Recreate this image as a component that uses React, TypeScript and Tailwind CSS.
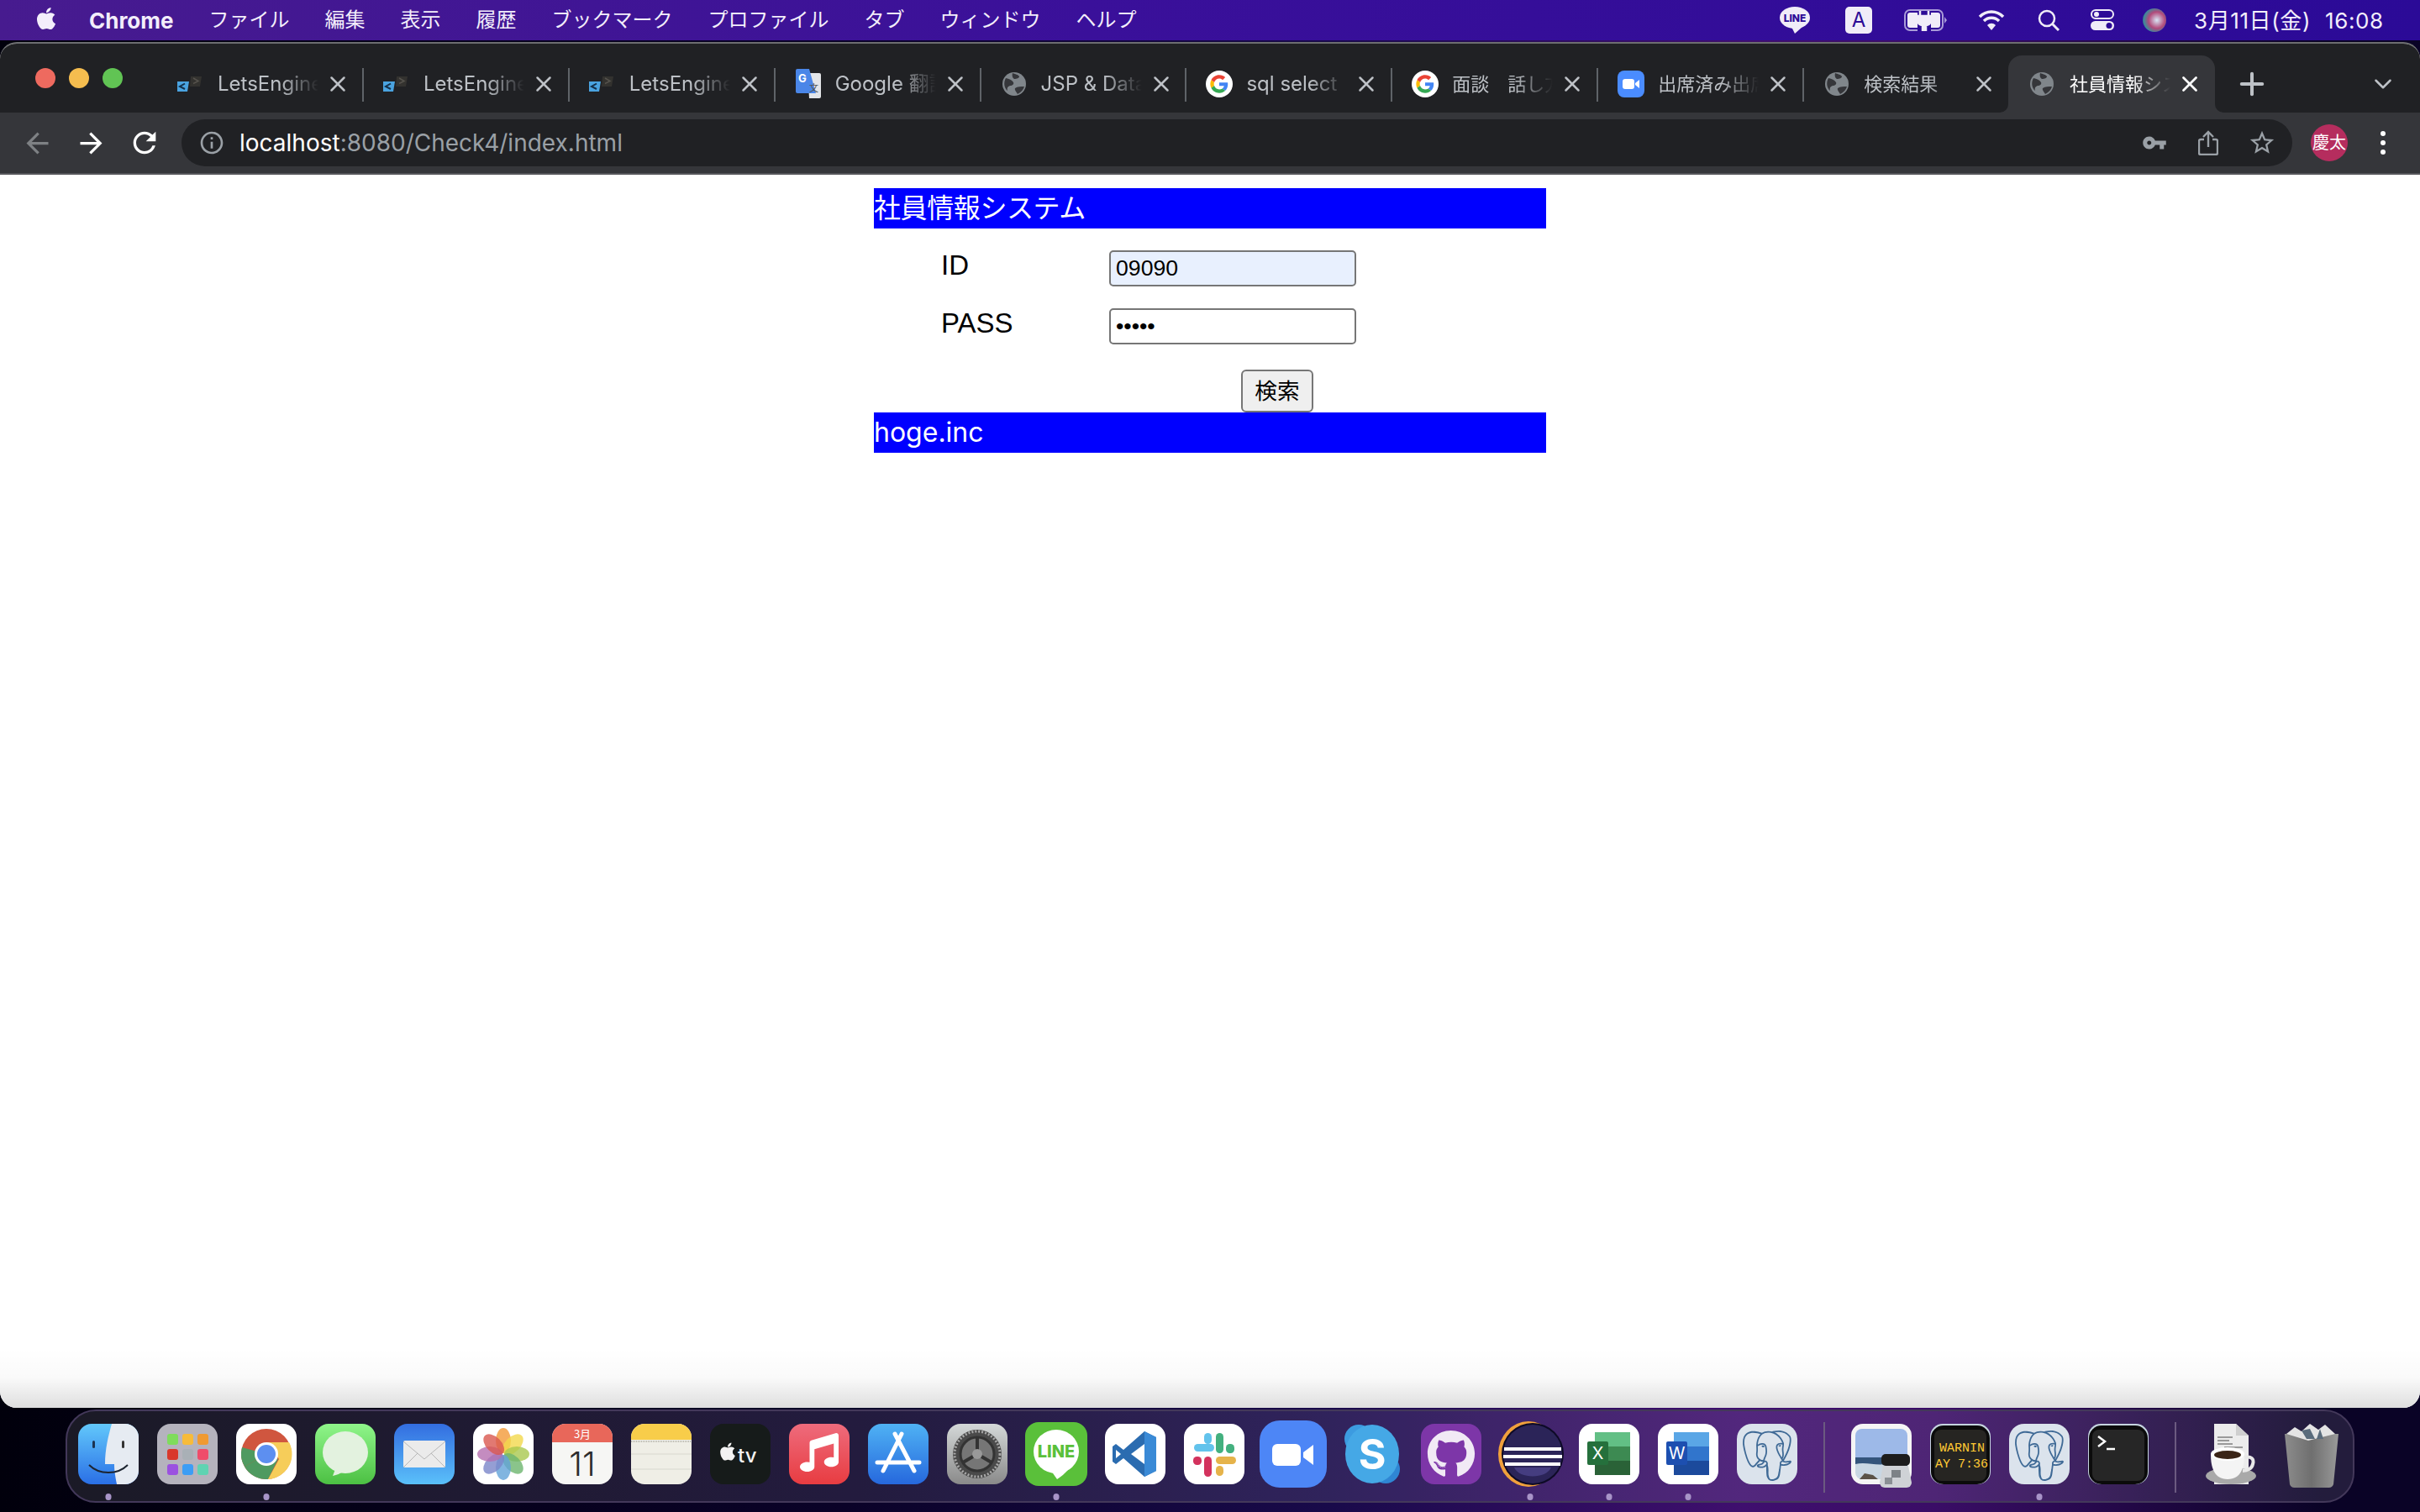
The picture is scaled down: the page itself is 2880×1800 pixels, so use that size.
import type { ReactNode } from "react";
import { ChevronDown, Plus, X } from "lucide-react";
import { FaApple, FaGithub, FaMusic } from "react-icons/fa";
import { SiPostgresql } from "react-icons/si";

const menus = ["ファイル", "編集", "表示", "履歴", "ブックマーク", "プロファイル", "タブ", "ウィンドウ", "ヘルプ"];

const GlobeIcon = () => (
	<svg width="32" height="32" viewBox="0 0 32 32">
		<circle cx="16" cy="16" r="14" fill="#80868b" />
		<path d="M6 9c4 1 7 2 9 5 1 2-1 4-4 4-3 1-4 3-3 6-4-3-5-10-2-15z" fill="#35363a" />
		<path d="M17 21c3-2 7-2 11-2-1 4-4 7-8 9-1-2-4-5-3-7zM14 3c3 1 7 2 8 4 0 2-3 3-6 3-2-1-3-4-2-7z" fill="#35363a" />
	</svg>
);

const LetsIcon = () => (
	<svg width="32" height="32" viewBox="0 0 32 32">
		<path d="M16 7h13l-2 12H15z" fill="#33322f" />
		<path d="M19 9l6 3.5-6 3" fill="none" stroke="#55524c" strokeWidth="1.5" />
		<path d="M0 13h14l-2 12H0z" fill="#4aa3e0" />
		<path d="M9 15.5l-6 3.5 6 3" fill="none" stroke="#14304a" strokeWidth="2" />
	</svg>
);

const TranslateIcon = () => (
	<svg width="32" height="38" viewBox="0 0 32 38">
		<path d="M15 6h14a2 2 0 0 1 2 2v26a2 2 0 0 1-2 2H17z" fill="#e3e5e8" />
		<path d="M3 1h14l8 29H3a2 2 0 0 1-2-2V3a2 2 0 0 1 2-2z" fill="#4a86e8" />
		<text x="4" y="17" fontSize="13" fontWeight="700" fill="#fff" fontFamily="Inter">G</text>
		<text x="17" y="28" fontSize="11" fill="#555" fontFamily="Noto Sans CJK JP">文</text>
	</svg>
);

const GoogleIcon = () => (
	<svg width="32" height="32" viewBox="0 0 48 48">
		<circle cx="24" cy="24" r="24" fill="#fff" />
		<g transform="translate(8 8) scale(0.667)">
			<path fill="#EA4335" d="M24 9.5c3.5 0 6.7 1.2 9.2 3.6l6.9-6.9C35.9 2.4 30.5 0 24 0 14.6 0 6.5 5.4 2.6 13.2l8 6.2C12.5 13.7 17.8 9.5 24 9.5z" />
			<path fill="#4285F4" d="M47 24.5c0-1.6-.1-3.1-.4-4.5H24v9h12.9c-.6 3-2.2 5.5-4.7 7.2l7.7 6c4.5-4.2 7.1-10.3 7.1-17.7z" />
			<path fill="#FBBC05" d="M10.5 28.6c-.5-1.4-.8-3-.8-4.6s.3-3.2.8-4.6l-8-6.2C.9 16.5 0 20.1 0 24s.9 7.5 2.6 10.8l7.9-6.2z" />
			<path fill="#34A853" d="M24 48c6.5 0 11.9-2.1 15.9-5.8l-7.7-6c-2.2 1.4-4.9 2.3-8.2 2.3-6.2 0-11.5-4.2-13.4-9.9l-8 6.2C6.5 42.6 14.6 48 24 48z" />
		</g>
	</svg>
);

const ZoomFavicon = () => (
	<svg width="32" height="32" viewBox="0 0 32 32">
		<rect width="32" height="32" rx="8" fill="#4a8cff" />
		<rect x="6" y="10" width="14" height="12" rx="3" fill="#fff" />
		<path d="M21 15l5-4v10l-5-4z" fill="#fff" />
	</svg>
);

const tabs: { title: string; icon: ReactNode; cjk?: boolean }[] = [
	{ title: "LetsEngine", icon: <LetsIcon /> },
	{ title: "LetsEngine", icon: <LetsIcon /> },
	{ title: "LetsEngine", icon: <LetsIcon /> },
	{ title: "Google 翻訳", icon: <TranslateIcon /> },
	{ title: "JSP & Data", icon: <GlobeIcon /> },
	{ title: "sql select", icon: <GoogleIcon /> },
	{ title: "面談　話し方", icon: <GoogleIcon />, cjk: true },
	{ title: "出席済み出席", icon: <ZoomFavicon />, cjk: true },
	{ title: "検索結果", icon: <GlobeIcon />, cjk: true },
];

const Tile = ({ children }: { children: ReactNode }) => (
	<svg width="72" height="72" viewBox="0 0 72 72" className="overflow-visible">
		{children}
	</svg>
);

const Finder = () => (
	<Tile>
		<defs>
			<linearGradient id="fa" x1="0" y1="0" x2="0" y2="1">
				<stop offset="0" stopColor="#62c8fb" />
				<stop offset="1" stopColor="#2a6fe6" />
			</linearGradient>
		</defs>
		<rect width="72" height="72" rx="16" fill="url(#fa)" />
		<path d="M40 0h16a16 16 0 0 1 16 16v40a16 16 0 0 1-16 16H46c-2-10-3-16-3-24H32c0-18 4-34 8-48z" fill="#e6ebf2" />
		<rect x="17" y="20" width="3" height="9" rx="1.5" fill="#1c3350" />
		<rect x="52" y="20" width="3" height="9" rx="1.5" fill="#333" />
		<path d="M13 49c12 12 34 12 46 0" fill="none" stroke="#1c2430" strokeWidth="2" />
	</Tile>
);

const launchColors = ["#7fdc5c", "#f7bb3a", "#f09a32", "#d9382c", "#a9b0b6", "#ef4c6a", "#9b51e0", "#3d9df5", "#5fd3b2"];

const Launchpad = () => (
	<Tile>
		<rect width="72" height="72" rx="16" fill="#b5b3bd" />
		{launchColors.map((color, index) => (
			<rect key={index.toString()} x={12 + (index % 3) * 18} y={12 + Math.floor(index / 3) * 18} width="13" height="13" rx="3" fill={color} />
		))}
	</Tile>
);

const Chrome = () => (
	<Tile>
		<rect width="72" height="72" rx="16" fill="#fff" />
		<circle cx="36" cy="36" r="30" fill="#d0563f" />
		<path d="M36 36L10 51a30 30 0 0 1-3-23z" fill="#4f9a60" />
		<path d="M10 51a30 30 0 0 0 28 15l12-24-14-6z" fill="#4f9a60" />
		<path d="M36 22h27a30 30 0 0 1-25 44l13-24z" fill="#f6cd5a" />
		<circle cx="36" cy="36" r="14" fill="#fff" />
		<circle cx="36" cy="36" r="11" fill="#5d8ff0" />
	</Tile>
);

const Messages = () => (
	<Tile>
		<defs>
			<linearGradient id="ms" x1="0" y1="0" x2="0" y2="1">
				<stop offset="0" stopColor="#8ff58a" />
				<stop offset="1" stopColor="#4cc043" />
			</linearGradient>
		</defs>
		<rect width="72" height="72" rx="16" fill="url(#ms)" />
		<ellipse cx="36" cy="34" rx="27" ry="25" fill="#e3f2df" />
		<path d="M24 54l-3 8c5-1 9-3 12-5z" fill="#e3f2df" />
	</Tile>
);

const Mail = () => (
	<Tile>
		<defs>
			<linearGradient id="ml" x1="0" y1="0" x2="0" y2="1">
				<stop offset="0" stopColor="#336de0" />
				<stop offset="1" stopColor="#5ac0fa" />
			</linearGradient>
		</defs>
		<rect width="72" height="72" rx="16" fill="url(#ml)" />
		<rect x="11" y="20" width="50" height="32" rx="2" fill="#ebebeb" />
		<path d="M11 21l25 21 25-21M11 52l17-17M61 52L44 35" fill="none" stroke="#b7b7b7" strokeWidth="1" />
	</Tile>
);

const petalColors = ["#f29a38", "#f3d84c", "#a9c84f", "#6db56e", "#62a3d8", "#7a86c9", "#b56fb0", "#d9584f"];

const Photos = () => (
	<Tile>
		<rect width="72" height="72" rx="16" fill="#fff" />
		{petalColors.map((color, index) => (
			<ellipse key={index.toString()} cx="36" cy="20" rx="9" ry="15" fill={color} opacity="0.8" transform={`rotate(${index * 45} 36 36)`} />
		))}
	</Tile>
);

const CalendarTile = () => (
	<Tile>
		<rect width="72" height="72" rx="16" fill="#f6f6f4" />
		<path d="M0 22V16A16 16 0 0 1 16 0h40a16 16 0 0 1 16 16v6z" fill="#e8675a" />
		<text x="36" y="17" textAnchor="middle" fontSize="13" fill="#fff" fontFamily="Noto Sans CJK JP">3月</text>
		<text x="36" y="62" textAnchor="middle" fontSize="40" fill="#2d2d2d" fontFamily="Inter" fontWeight="300">11</text>
	</Tile>
);

const Notes = () => (
	<Tile>
		<rect width="72" height="72" rx="16" fill="#efeee6" />
		<path d="M0 19V16A16 16 0 0 1 16 0h40a16 16 0 0 1 16 16v3z" fill="#f8cd4a" />
		<path d="M0 21h72" stroke="#b9b8ae" strokeWidth="2" strokeDasharray="1 1" />
		<path d="M0 36h72M0 54h72" stroke="#d8d7ce" strokeWidth="1" />
	</Tile>
);

const AppleTv = () => (
	<Tile>
		<rect width="72" height="72" rx="16" fill="#161b1a" />
		<FaApple x="9" y="21" size="24" color="#f2f2f2" />
		<text x="33" y="46" fontSize="24" fontWeight="500" fill="#f2f2f2" fontFamily="Inter">tv</text>
	</Tile>
);

const Music = () => (
	<Tile>
		<defs>
			<linearGradient id="mu" x1="0" y1="0" x2="0" y2="1">
				<stop offset="0" stopColor="#ee6b7c" />
				<stop offset="1" stopColor="#e83c41" />
			</linearGradient>
		</defs>
		<rect width="72" height="72" rx="16" fill="url(#mu)" />
		<FaMusic x="13" y="11" size="46" color="#fff" />
	</Tile>
);

const AppStore = () => (
	<Tile>
		<defs>
			<linearGradient id="as" x1="0" y1="0" x2="0" y2="1">
				<stop offset="0" stopColor="#4fb2f4" />
				<stop offset="1" stopColor="#2668dd" />
			</linearGradient>
		</defs>
		<rect width="72" height="72" rx="16" fill="url(#as)" />
		<path d="M40 12L18 56M32 12l23 44M11 46h50" stroke="#fff" strokeWidth="5" strokeLinecap="round" fill="none" />
	</Tile>
);

const SystemPrefs = () => (
	<Tile>
		<defs>
			<linearGradient id="sp" x1="0" y1="0" x2="0" y2="1">
				<stop offset="0" stopColor="#d4d8d8" />
				<stop offset="1" stopColor="#8a8a8a" />
			</linearGradient>
		</defs>
		<rect width="72" height="72" rx="16" fill="url(#sp)" />
		<circle cx="36" cy="36" r="29" fill="#4a4a4a" />
		<circle cx="36" cy="36" r="27" fill="none" stroke="#a8a8a8" strokeWidth="3" strokeDasharray="2 2" />
		<circle cx="36" cy="36" r="20" fill="#767676" stroke="#333" strokeWidth="3" />
		<path d="M36 36V16M36 36L19 46M36 36l17 10" stroke="#333" strokeWidth="4" />
		<circle cx="36" cy="36" r="6" fill="#999" />
	</Tile>
);

const LineTile = () => (
	<Tile>
		<rect x="-1" y="-2" width="74" height="76" rx="16" fill="#5ac03a" />
		<ellipse cx="36" cy="33" rx="27" ry="26" fill="#fff" />
		<path d="M30 56l7 10c5-3 9-7 13-11z" fill="#fff" />
		<text x="36" y="40" textAnchor="middle" fontSize="20" fontWeight="800" fill="#5ac03a" fontFamily="Inter">LINE</text>
	</Tile>
);

const VsCode = () => (
	<Tile>
		<rect width="72" height="72" rx="16" fill="#fff" />
		<path d="M47 9L61 16V56L47 63L22 41L13 48L9 45V27L13 24L22 31Z" fill="#2b6cb0" />
		<path d="M47 9L61 16V56L47 63Z" fill="#3a8ad6" />
		<path d="M47 24L31 36L47 48Z" fill="#fff" />
		<path d="M13 31L19 36L13 41Z" fill="#fff" />
	</Tile>
);

const Slack = () => (
	<Tile>
		<rect width="72" height="72" rx="16" fill="#fff" />
		<rect x="12" y="24" width="24" height="9" rx="4.5" fill="#62c3ec" />
		<rect x="24" y="11" width="9" height="13" rx="4.5" fill="#62c3ec" />
		<rect x="38" y="11" width="9" height="24" rx="4.5" fill="#43b07f" />
		<rect x="50" y="24" width="10" height="11" rx="4.5" fill="#43b07f" />
		<rect x="38" y="39" width="24" height="9" rx="4.5" fill="#e6b34a" />
		<rect x="38" y="50" width="9" height="12" rx="4.5" fill="#e6b34a" />
		<rect x="24" y="39" width="9" height="24" rx="4.5" fill="#d3325d" />
		<rect x="11" y="39" width="10" height="10" rx="4.5" fill="#d3325d" />
	</Tile>
);

const ZoomTile = () => (
	<Tile>
		<rect x="-4" y="-4" width="80" height="80" rx="24" fill="#4d86f6" />
		<rect x="11" y="24" width="34" height="26" rx="6" fill="#fff" />
		<path d="M48 34l12-9v24l-12-9z" fill="#fff" />
	</Tile>
);

const Skype = () => (
	<Tile>
		<circle cx="20" cy="18" r="17" fill="#3c9be0" />
		<circle cx="52" cy="54" r="17" fill="#2f86d4" />
		<ellipse cx="36" cy="36" rx="32" ry="35" fill="#45a8e6" />
		<text x="36" y="54" textAnchor="middle" fontSize="50" fontWeight="700" fill="#fff" fontFamily="Inter">S</text>
	</Tile>
);

const Github = () => (
	<Tile>
		<rect width="72" height="72" rx="16" fill="#7d36a8" />
		<FaGithub x="7" y="7" size="58" color="#f1e9f5" />
	</Tile>
);

const Eclipse = () => (
	<Tile>
		<ellipse cx="36" cy="36" rx="36" ry="39" fill="#f0a03c" transform="translate(-2 0)" />
		<circle cx="39" cy="36" r="37" fill="#0d0a26" />
		<circle cx="39" cy="36" r="35" fill="#2b2458" />
		<path d="M5 28h68v4H5zM4 37h70v4H4zM6 46h66v4H6z" fill="#fff" />
		<path d="M17 52c6 14 38 14 44 0z" fill="#453d80" />
	</Tile>
);

const OfficeTile = ({ letter, dark, mid, light, badge }: { letter: string; dark: string; mid: string; light: string; badge: string }) => (
	<Tile>
		<rect width="72" height="72" rx="16" fill="#fff" />
		<rect x="19" y="10" width="42" height="17" fill={light} />
		<rect x="19" y="27" width="42" height="17" fill={mid} />
		<rect x="19" y="44" width="42" height="17" fill={dark} />
		<rect x="10" y="21" width="25" height="28" rx="2" fill={badge} />
		<text x="22.5" y="42" textAnchor="middle" fontSize="20" fill="#fff" fontFamily="Inter">{letter}</text>
	</Tile>
);

const Postgres = () => (
	<Tile>
		<rect width="72" height="72" rx="18" fill="#dbe3ec" />
		<SiPostgresql x="6" y="8" size="60" color="#3f6a96" />
	</Tile>
);

const Preview = () => (
	<Tile>
		<rect width="72" height="72" rx="14" fill="#f5f5f5" />
		<path d="M5 14a8 8 0 0 1 8-8h46a8 8 0 0 1 8 8v28H5z" fill="#9db9e8" />
		<path d="M5 40h62v14H5z" fill="#34557c" />
		<path d="M5 48c12-3 24 2 36 0v18H13a8 8 0 0 1-8-8z" fill="#c9d7e3" />
		<path d="M10 66l6-7 10 2 6 5z" fill="#5b5348" />
		<rect x="36" y="36" width="34" height="14" rx="5" fill="#1d1d1d" />
		<path d="M38 50h30l4 20a6 6 0 0 1-6 6H40a6 6 0 0 1-6-6z" fill="#cfd2d6" />
		<rect x="48" y="55" width="11" height="9" fill="#7d8287" />
		<rect x="40" y="64" width="9" height="8" fill="#8b9095" />
	</Tile>
);

const ConsoleTile = () => (
	<Tile>
		<rect width="72" height="72" rx="15" fill="#c5d4df" />
		<rect x="1" y="2" width="70" height="70" rx="15" fill="#0b0b0b" />
		<rect x="5" y="7" width="62" height="61" rx="8" fill="#262522" />
		<text x="11" y="33" fontSize="15" fill="#ffc933" fontFamily="Liberation Mono">WARNIN</text>
		<text x="6" y="52" fontSize="15" fill="#ffc933" fontFamily="Liberation Mono">AY 7:36</text>
	</Tile>
);

const TerminalTile = () => (
	<Tile>
		<rect width="72" height="72" rx="15" fill="#c5d4df" />
		<rect x="1" y="2" width="70" height="70" rx="15" fill="#0b0b0b" />
		<rect x="5" y="7" width="62" height="61" rx="8" fill="#262626" />
		<path d="M12 15l8 6-8 6M22 30h10" fill="none" stroke="#fff" strokeWidth="2.5" />
	</Tile>
);

const CoffeeDoc = () => (
	<Tile>
		<path d="M14 0h26l15 14v58H14z" fill="#ececec" />
		<path d="M40 0v14h15z" fill="#cfcfcf" />
		<path d="M18 16h18M18 20h14M18 24h18M26 28h22" stroke="#9a9a9a" strokeWidth="2" />
		<ellipse cx="34" cy="62" rx="30" ry="10" fill="#a9a9a9" />
		<path d="M10 36h40c0 16-4 30-20 30S10 52 10 36z" fill="#f4f4f4" />
		<ellipse cx="30" cy="36" rx="20" ry="8" fill="#fff" />
		<ellipse cx="30" cy="37" rx="16" ry="5" fill="#3b2517" />
		<path d="M50 40c8-2 12 2 10 8-1 5-6 8-12 8" fill="none" stroke="#e8e8e8" strokeWidth="4" />
	</Tile>
);

const Trash = () => (
	<Tile>
		<defs>
			<linearGradient id="tr" x1="0" y1="0" x2="1" y2="0">
				<stop offset="0" stopColor="#8c8c8c" />
				<stop offset="0.5" stopColor="#6f6f6f" />
				<stop offset="1" stopColor="#9a9a9a" />
			</linearGradient>
		</defs>
		<path d="M4 12h64l-6 60a6 6 0 0 1-6 4H16a6 6 0 0 1-6-4z" fill="url(#tr)" />
		<path d="M6 12l10-8 8 5 10-9 10 7 8-6 12 11-32 8z" fill="#e4e4e4" />
		<path d="M24 8l6 10h10l-6-12zM46 6l-4 12h8z" fill="#5a6c7c" />
	</Tile>
);

const dockLeft: { icon: ReactNode; running?: boolean }[] = [
	{ icon: <Finder />, running: true },
	{ icon: <Launchpad /> },
	{ icon: <Chrome />, running: true },
	{ icon: <Messages /> },
	{ icon: <Mail /> },
	{ icon: <Photos /> },
	{ icon: <CalendarTile /> },
	{ icon: <Notes /> },
	{ icon: <AppleTv /> },
	{ icon: <Music /> },
	{ icon: <AppStore /> },
	{ icon: <SystemPrefs /> },
	{ icon: <LineTile />, running: true },
	{ icon: <VsCode /> },
	{ icon: <Slack /> },
	{ icon: <ZoomTile /> },
	{ icon: <Skype /> },
	{ icon: <Github /> },
	{ icon: <Eclipse />, running: true },
	{ icon: <OfficeTile letter="X" dark="#2a6237" mid="#3d8a52" light="#62bf85" badge="#25703c" />, running: true },
	{ icon: <OfficeTile letter="W" dark="#1c4a9c" mid="#3175cc" light="#5aa6e6" badge="#1d4fb0" />, running: true },
	{ icon: <Postgres /> },
];

const dockRecent: { icon: ReactNode; running?: boolean }[] = [
	{ icon: <Preview /> },
	{ icon: <ConsoleTile /> },
	{ icon: <Postgres />, running: true },
	{ icon: <TerminalTile /> },
];

const DockItem = ({ icon, running }: { icon: ReactNode; running?: boolean }) => (
	<div className="relative h-[72px] w-[72px] shrink-0">
		{icon}
		{running && <span className="absolute left-1/2 top-[83px] h-2 w-[7px] -translate-x-1/2 rounded-full bg-[#a894c8]" />}
	</div>
);

const DockDivider = () => <div className="mx-[9px] mt-[-2px] h-[84px] w-0.5 shrink-0 bg-[#6b5a80]" />;

const Field = ({ label, type, value, filled }: { label: string; type: string; value: string; filled?: boolean }) => (
	<div className="grid grid-cols-[280px_294px] items-start">
		<label className="pl-20 font-['Liberation_Sans',sans-serif] text-[33px] leading-[36px] text-black">{label}</label>
		<input
			readOnly
			type={type}
			value={value}
			className={`h-[43px] w-[294px] rounded-[5px] border-2 border-[#767676] px-1.5 font-['Liberation_Sans',sans-serif] text-[26.67px] text-black outline-none ${filled ? "bg-[#e8f0fe]" : "bg-white"}`}
		/>
	</div>
);

const App = () => {
	return (
		<div className="flex h-[1800px] w-[2880px] flex-col overflow-hidden bg-[linear-gradient(90deg,#01000c_0%,#0a0228_35%,#190a4a_55%,#3f0f6e_72%,#3a0d66_80%,#0a0326_96%)] font-['Inter','Noto_Sans_CJK_JP',sans-serif]">
			{/* menu bar */}
			<div className="flex h-12 shrink-0 items-center bg-[linear-gradient(90deg,#471b8f,#3a109a_45%,#2b0a97)] pl-10 pr-[37px] text-[24px] text-[#f3eefb]">
				<FaApple size={30} className="mb-1" />
				<span className="ml-[36px] mr-[42px] text-[26px] font-bold">Chrome</span>
				<div className="flex gap-[42px]">
					{menus.map((menu) => (
						<span key={menu}>{menu}</span>
					))}
				</div>
				<div className="ml-auto flex items-center">
					<svg width="36" height="34" viewBox="0 0 36 34">
						<ellipse cx="18" cy="14" rx="18" ry="13" fill="#f0ecf8" />
						<path d="M14 25l4 8 9-8z" fill="#f0ecf8" />
						<text x="18" y="19" textAnchor="middle" fontSize="12" fontWeight="800" fill="#2c0a96" fontFamily="Inter">LINE</text>
					</svg>
					<div className="ml-[42px] flex h-8 w-8 items-center justify-center rounded-[5px] bg-[#f0ecf8] text-[24px] text-[#2c0a96]">A</div>
					<svg className="ml-[38px]" width="52" height="26" viewBox="0 0 52 26">
						<rect x="1" y="1" width="45" height="24" rx="6" fill="none" stroke="#a99bd8" strokeWidth="2" />
						<rect x="4" y="4" width="39" height="18" rx="3" fill="#f0ecf8" />
						<path d="M48 9l3 4-3 4z" fill="#a99bd8" />
						<path d="M16 2h16v24H16z" fill="#2c0a96" />
						<path d="M19 2v7M29 2v7M16 8h16v5c0 4-3 6-6 6v7h-4v-7c-3 0-6-2-6-6z" stroke="#f0ecf8" strokeWidth="2.5" fill="#f0ecf8" />
					</svg>
					<svg className="ml-[36px]" width="32" height="26" viewBox="0 0 32 26">
						<path d="M2 9c8-8 20-8 28 0M7 14c5-5 13-5 18 0" fill="none" stroke="#f0ecf8" strokeWidth="3.5" />
						<path d="M11 19c3-3 7-3 10 0l-5 6z" fill="#f0ecf8" />
					</svg>
					<svg className="ml-[39px]" width="26" height="26" viewBox="0 0 26 26">
						<circle cx="11" cy="11" r="9" fill="none" stroke="#f0ecf8" strokeWidth="2.5" />
						<path d="M17 17l8 8" stroke="#f0ecf8" strokeWidth="3" />
					</svg>
					<svg className="ml-[37px]" width="28" height="26" viewBox="0 0 28 26">
						<rect x="1" y="1" width="26" height="10" rx="5" fill="none" stroke="#f0ecf8" strokeWidth="2" />
						<circle cx="7" cy="6" r="3" fill="#f0ecf8" />
						<rect y="14" width="28" height="11" rx="5.5" fill="#f0ecf8" />
						<circle cx="22" cy="19.5" r="3.5" fill="#2c0a96" />
					</svg>
					<div className="ml-[34px] h-7 w-7 rounded-full bg-[radial-gradient(circle_at_60%_50%,#d8e6f5,#b14a7a_45%,#3e8a9c_70%,#27255e)]" />
					<span className="ml-[33px] w-[232px] whitespace-nowrap text-[26px] tracking-[0.6px]">
						3月11日(金)<span className="ml-[17px]">16:08</span>
					</span>
				</div>
			</div>

			{/* browser window */}
			<div className="mt-0.5 flex h-[1626px] shrink-0 flex-col overflow-hidden rounded-[20px] border-t-2 border-[#6d6e70] bg-white">
				<div className="flex h-[82px] shrink-0 items-start bg-[#202124] pt-3.5">
					<div className="flex h-[68px] w-[188px] shrink-0 items-start gap-4 pl-[42px] pt-[15px]">
						<span className="h-6 w-6 rounded-full bg-[#ee6a5f]" />
						<span className="h-6 w-6 rounded-full bg-[#f5bd4f]" />
						<span className="h-6 w-6 rounded-full bg-[#61c454]" />
					</div>
					{tabs.map((tab, index) => (
						<div key={index.toString()} className="relative flex h-[68px] w-[244.9px] shrink-0 items-center pl-[23px]">
							<span className="flex w-8 shrink-0 items-center justify-center">{tab.icon}</span>
							<span className={`ml-4 mr-1.5 w-[120px] overflow-hidden whitespace-nowrap text-[#bdc1c6] [mask-image:linear-gradient(to_right,black_62%,transparent)] ${tab.cjk ? "text-[22px]" : "text-[24px]"}`}>
								{tab.title}
							</span>
							<X size={30} strokeWidth={2} className="ml-0.5 shrink-0 text-[#bdc1c6]" />
							{index !== 8 && <span className="absolute right-0 top-[15px] h-10 w-0.5 bg-[#5f6368]" />}
						</div>
					))}
					<div className="relative -ml-0.5 flex h-[68px] w-[246px] shrink-0 items-center rounded-t-[16px] bg-[#35363a] pl-[24px]">
						<span className="absolute -left-2.5 bottom-0 h-2.5 w-2.5 bg-[#35363a]">
							<span className="block h-full w-full rounded-br-[10px] bg-[#202124]" />
						</span>
						<span className="absolute -right-2.5 bottom-0 h-2.5 w-2.5 bg-[#35363a]">
							<span className="block h-full w-full rounded-bl-[10px] bg-[#202124]" />
						</span>
						<GlobeIcon />
						<span className="ml-[17px] mr-1.5 w-[120px] overflow-hidden whitespace-nowrap text-[22px] text-white [mask-image:linear-gradient(to_right,black_62%,transparent)]">
							社員情報システム
						</span>
						<X size={30} strokeWidth={2.2} className="ml-0.5 shrink-0 text-white" />
					</div>
					<Plus size={42} strokeWidth={2.3} className="ml-[23px] mt-[13px] shrink-0 text-[#bdc1c6]" />
					<ChevronDown size={34} strokeWidth={1.8} className="ml-auto mr-[27px] mt-[17px] shrink-0 text-[#bdc1c6]" />
				</div>

				<div className="flex h-[74px] shrink-0 items-center border-b-2 border-[#55565a] bg-[#35363a] pl-3 pr-7">
					<div className="flex w-16 justify-center">
						<svg width="39" height="39" viewBox="0 0 24 24" fill="#7e8184">
							<path d="M20 11H7.83l5.59-5.59L12 4l-8 8 8 8 1.41-1.41L7.83 13H20v-2z" />
						</svg>
					</div>
					<div className="flex w-16 justify-center">
						<svg width="39" height="39" viewBox="0 0 24 24" fill="#fff">
							<path d="M4 11h12.17l-5.59-5.59L12 4l8 8-8 8-1.41-1.41L16.17 13H4v-2z" />
						</svg>
					</div>
					<div className="flex w-16 justify-center">
						<svg width="40" height="40" viewBox="0 0 24 24" fill="#fff">
							<path d="M17.65 6.35A7.958 7.958 0 0 0 12 4c-4.42 0-7.99 3.58-7.99 8s3.57 8 7.99 8c3.73 0 6.84-2.55 7.73-6h-2.08A5.99 5.99 0 0 1 12 18c-3.31 0-6-2.69-6-6s2.69-6 6-6c1.66 0 3.14.69 4.22 1.78L13 11h7V4l-2.35 2.35z" />
						</svg>
					</div>
					<div className="ml-3 flex h-14 min-w-0 flex-1 items-center rounded-full bg-[#202124] pl-5 pr-4">
						<svg width="32" height="32" viewBox="0 0 24 24" fill="#9aa0a6">
							<path d="M11 7h2v2h-2zm0 4h2v6h-2zm1-9C6.48 2 2 6.48 2 12s4.48 10 10 10 10-4.48 10-10S17.52 2 12 2zm0 18c-4.41 0-8-3.59-8-8s3.59-8 8-8 8 3.59 8 8-3.59 8-8 8z" />
						</svg>
						<span className="ml-[17px] text-[28px] text-white">
							localhost<span className="text-[#9aa0a6]">:8080/Check4/index.html</span>
						</span>
						<div className="ml-auto flex items-center gap-6">
							<span className="flex w-10 justify-center">
								<svg width="30" height="30" viewBox="0 0 24 24" fill="#9aa0a6">
									<path d="M12.65 10C11.83 7.67 9.61 6 7 6c-3.31 0-6 2.69-6 6s2.69 6 6 6c2.61 0 4.83-1.67 5.65-4H17v4h4v-4h2v-4H12.65zM7 14c-1.1 0-2-.9-2-2s.9-2 2-2 2 .9 2 2-.9 2-2 2z" />
								</svg>
							</span>
							<span className="flex w-10 justify-center">
								<svg width="24" height="30" viewBox="0 0 24 30" fill="none" stroke="#9aa0a6" strokeWidth="2.4">
									<path d="M7 11H3a2 2 0 0 0-2 2v14a2 2 0 0 0 2 2h18a2 2 0 0 0 2-2V13a2 2 0 0 0-2-2h-4M12 20V2M6 8l6-6 6 6" />
								</svg>
							</span>
							<span className="flex w-10 justify-center">
								<svg width="34" height="34" viewBox="0 0 24 24" fill="#9aa0a6">
									<path d="M22 9.24l-7.19-.62L12 2 9.19 8.63 2 9.24l5.46 4.73L5.82 21 12 17.27 18.18 21l-1.63-7.03L22 9.24zM12 15.4l-3.76 2.27 1-4.28-3.32-2.88 4.38-.38L12 6.1l1.71 4.04 4.38.38-3.32 2.88 1 4.28L12 15.4z" />
								</svg>
							</span>
						</div>
					</div>
					<div className="ml-[22px] flex h-11 w-11 shrink-0 items-center justify-center rounded-full bg-[#b52d5e] text-[20px] text-white">慶太</div>
					<div className="ml-[26px] flex w-8 shrink-0 flex-col items-center gap-[5px]">
						<span className="h-[6px] w-[6px] rounded-full bg-white" />
						<span className="h-[6px] w-[6px] rounded-full bg-white" />
						<span className="h-[6px] w-[6px] rounded-full bg-white" />
					</div>
				</div>

				{/* page */}
				<div className="relative min-h-0 flex-1 bg-white pt-[16px]">
					<div className="mx-auto w-[800px]">
						<div className="flex h-12 items-center bg-[#0000ff] text-[32px] tracking-[-0.4px] text-white">社員情報システム</div>
						<div className="flex flex-col gap-[26px] pt-[26px]">
							<Field label="ID" type="text" value="09090" filled />
							<Field label="PASS" type="password" value="hoge1" />
						</div>
						<div className="pl-[437px] pt-[30px]">
							<button className="flex h-[51px] w-[86px] items-center justify-center rounded-[6px] border-2 border-[#767676] bg-[#efefef] font-['Liberation_Sans','Noto_Sans_CJK_JP',sans-serif] text-[26.67px] text-black">
								検索
							</button>
						</div>
						<div className="flex h-12 items-center bg-[#0000ff] text-[32px] text-white">hoge.inc</div>
					</div>
					<div className="pointer-events-none absolute inset-x-0 bottom-0 h-[72px] bg-gradient-to-b from-transparent via-black/[0.02] to-black/[0.13]" />
				</div>
			</div>

			{/* dock */}
			<div className="mx-[78px] mt-0.5 flex h-[111px] shrink-0 items-start gap-[22px] rounded-[36px] border-2 border-[#43385a] bg-white/10 pl-[13px] pt-[15px]">
				{dockLeft.map((item, index) => (
					<DockItem key={index.toString()} icon={item.icon} running={item.running} />
				))}
				<DockDivider />
				{dockRecent.map((item, index) => (
					<DockItem key={index.toString()} icon={item.icon} running={item.running} />
				))}
				<DockDivider />
				<DockItem icon={<CoffeeDoc />} />
				<DockItem icon={<Trash />} />
			</div>
		</div>
	);
};

export default App;
